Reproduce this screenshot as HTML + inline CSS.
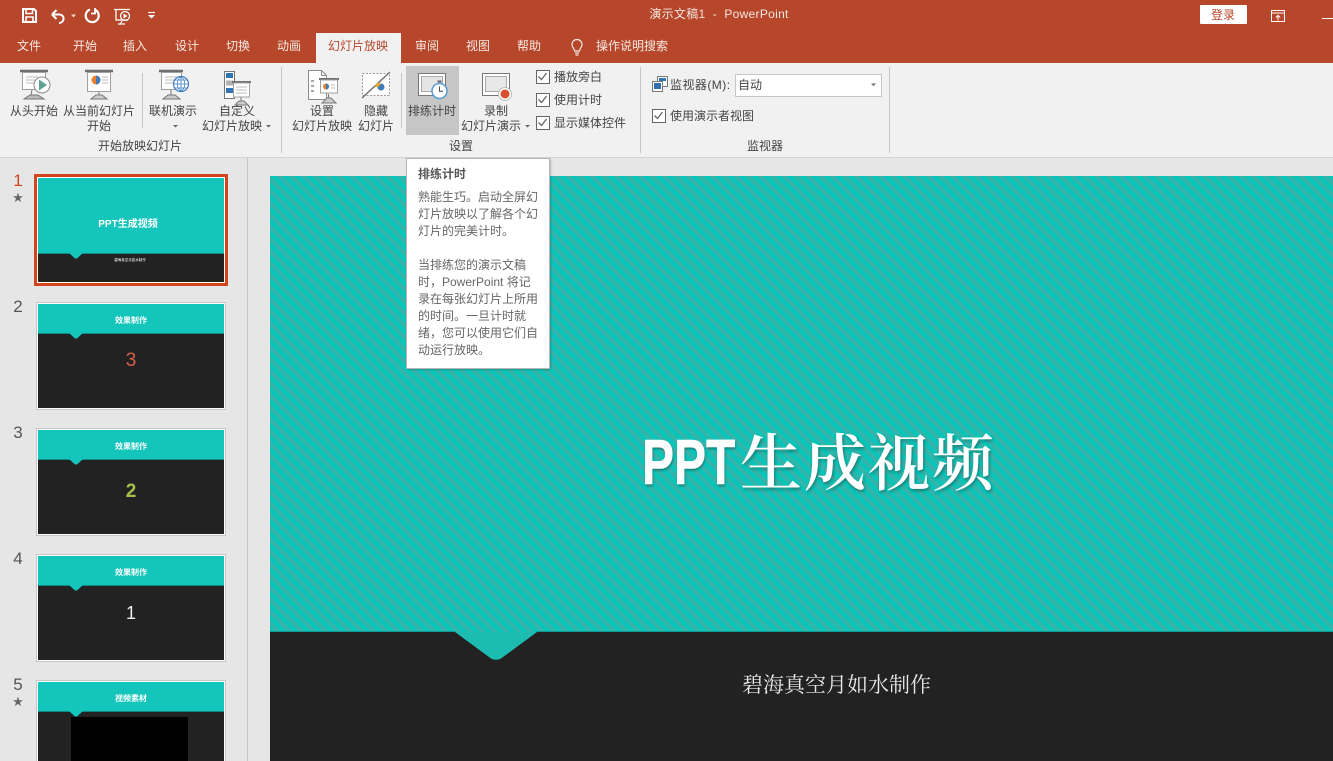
<!DOCTYPE html>
<html lang="zh-CN"><head><meta charset="utf-8"><title>演示文稿1 - PowerPoint</title>
<style>
html,body{margin:0;padding:0;width:1333px;height:761px;overflow:hidden;background:#e6e6e6}
body{position:relative;font-family:"Liberation Sans","Noto Sans CJK SC",sans-serif;font-size:12px;color:#444}
div,span,svg{position:absolute}
.t{white-space:nowrap;line-height:16px;height:16px}
.c{transform:translateX(-50%)}
.w{color:#f6e9e4}
.thumb{left:36px;width:188px;height:106px;border:1px solid #c6c6c6;background:#fff}
.in{left:1px;top:1px;width:186px;height:104px;background:#222;overflow:hidden}
.band{left:0;top:0;width:186px;height:29px;background:#13c5ba;border-bottom:1px solid #0e8a83}
.th{left:0;width:186px;text-align:center;top:10px;font:bold 8px/14px "Liberation Sans","Noto Sans CJK SC",sans-serif;color:#fff;white-space:nowrap}
.num{font-size:17px;line-height:20px;left:10px;width:16px;text-align:center;color:#555}
.star{font-size:13px;line-height:14px;left:10px;width:16px;text-align:center;color:#666;font-family:"DejaVu Sans",sans-serif}
.sep{width:1px;background:#c6c6c6}
.cb{width:12px;height:12px;border:1px solid #666;background:#fff}
</style></head><body>

<div style="left:0;top:0;width:1333px;height:63px;background:#b7472a"></div>
<div style="left:0;top:63px;width:1333px;height:94px;background:#f1f1f1"></div>
<div style="left:0;top:157px;width:1333px;height:1px;background:#d4d4d4"></div>

<!-- QAT -->
<svg style="left:0;top:0" width="170" height="32" fill="none" stroke="#fff">
<path d="M23 9h11l2 2v11H23z" stroke-width="2"/><path d="M26 9v4.500h6.500V9" stroke-width="1.600"/><path d="M26 22v-5h7v5" stroke-width="1.600"/>
<path d="M52 14.500l4.500-4.500M52 14.500l4.500 4.500" stroke-width="2"/><path d="M52.500 14.500h7c5.500.5 5.500 8-.5 8.500" stroke-width="2"/>
<path d="M71 14.500h5l-2.500 3z" fill="#f3d9d0" stroke="none"/>
<path d="M90 9.500a6.500 6.500 0 1 0 5.500 .5" stroke-width="2.200"/><path d="M95 8v5.500h-4" stroke-width="1.800"/>
<path d="M114 9.500h16M116 10v10h12" stroke-width="1.300"/><circle cx="125" cy="16" r="4.500" stroke-width="1.300"/><path d="M123.500 13.500l4 2.500-4 2.500z" fill="#fff" stroke="none"/><path d="M122 21l-2 3.500M118 24h7" stroke-width="1.200"/>
<path d="M148 12.500h7" stroke-width="1.200"/><path d="M148 15h7l-3.500 3.500z" fill="#fff" stroke="none"/>
</svg>
<div class="t w c" style="left:719px;top:6px;color:#f5e6e1;letter-spacing:.3px">演示文稿1&nbsp;&nbsp;-&nbsp;&nbsp;PowerPoint</div>
<div style="left:1200px;top:5px;width:47px;height:19px;background:#fff;border-radius:1px"></div>
<div class="t c" style="left:1223px;top:7px;color:#b7472a">登录</div>
<svg style="left:1265px;top:5px" width="68" height="24" fill="none" stroke="#fff"><path d="M6.500 5.500h13v11h-13zM6.500 8h13M13 15.500v-5M10.800 12.500l2.200-2.200 2.200 2.200"/><path d="M57 13.500h11" stroke-width="1"/></svg>

<!-- tabs -->
<div style="left:316px;top:33px;width:85px;height:30px;background:#f1f1f1"></div>
<div class="t w c" style="left:29px;top:38px">文件</div>
<div class="t w c" style="left:85px;top:38px">开始</div>
<div class="t w c" style="left:135px;top:38px">插入</div>
<div class="t w c" style="left:187px;top:38px">设计</div>
<div class="t w c" style="left:238px;top:38px">切换</div>
<div class="t w c" style="left:289px;top:38px">动画</div>
<div class="t c" style="left:358px;top:38px;color:#b7472a">幻灯片放映</div>
<div class="t w c" style="left:427px;top:38px">审阅</div>
<div class="t w c" style="left:478px;top:38px">视图</div>
<div class="t w c" style="left:529px;top:38px">帮助</div>
<svg style="left:568px;top:38px" width="18" height="20" fill="none" stroke="#f6e9e4" stroke-width="1.200"><path d="M6.500 13c0-2.500-2.500-3.500-2.500-6.500a5 5 0 0 1 10 0c0 3-2.500 4-2.500 6.500zM7 15h4M7.500 17h3"/></svg>
<div class="t w c" style="left:632px;top:38px">操作说明搜索</div>

<!-- ribbon highlight -->
<div style="left:406px;top:66px;width:53px;height:69px;background:#c6c6c6"></div>

<!-- separators -->
<div class="sep" style="left:142px;top:73px;height:55px"></div>
<div class="sep" style="left:281px;top:67px;height:86px"></div>
<div class="sep" style="left:401px;top:73px;height:55px"></div>
<div class="sep" style="left:640px;top:67px;height:86px"></div>
<div class="sep" style="left:889px;top:67px;height:86px"></div>

<!-- ribbon icons -->
<svg style="left:0;top:63px" width="640" height="50" fill="none">
<g transform="translate(20,0)"><path d="M0 8h28" stroke="#6f6f6f" stroke-width="2.500"/><path d="M2.500 9.500v17h23v-17z" fill="#fff" stroke="#a0a0a0"/><path d="M6 14h12M6 17h9M6 20h9" stroke="#bbb"/><path d="M12 27l-1 5M4 36l6-4h8l6 4z" fill="#bbb" stroke="#777"/><circle cx="22" cy="22" r="8" fill="#fff" stroke="#8a8a8a"/><path d="M19 16.500l8 5.500-8 5.500z" fill="#5fa191"/></g>
<g transform="translate(85,0)"><path d="M0 8h28" stroke="#6f6f6f" stroke-width="2.500"/><path d="M2.500 9.500v19h23v-19z" fill="#fff" stroke="#a0a0a0"/><circle cx="11" cy="17" r="4.500" fill="#e8812f"/><path d="M11 12.500a4.500 4.500 0 0 1 0 9z" fill="#3f7cb8"/><path d="M17 14h6M17 17h6M17 20h6" stroke="#bbb"/><path d="M14 29v3M6 36l5-4h6l5 4z" fill="#ccc" stroke="#777"/></g>
<g transform="translate(159,0)"><path d="M0 8h24" stroke="#6f6f6f" stroke-width="2.500"/><path d="M2.500 9.500v17h20v-17z" fill="#fff" stroke="#a0a0a0"/><path d="M6 14h12M6 17h9M6 20h8" stroke="#bbb"/><path d="M12 27v5M4 36l5-4h7l5 4z" fill="#ccc" stroke="#777"/><circle cx="22" cy="21" r="7.500" fill="#fff" stroke="#3d7ec0" stroke-width="1.200"/><path d="M14.500 21h15M22 13.500v15M16 17h12M16 25h12M22 13.500c-5 4-5 11 0 15M22 13.500c5 4 5 11 0 15" stroke="#3d7ec0" stroke-width=".8"/></g>
<g transform="translate(224,8)"><path d="M.5.500h10v27h-10z" fill="#fff" stroke="#777"/><path d="M2 2h7v5H2z" fill="#2f75b5"/><path d="M2 9.500h7v5H2z" fill="#b0b0b0"/><path d="M2 17h7v5H2z" fill="#2f75b5"/><path d="M8 11h19" stroke="#6f6f6f" stroke-width="2"/><path d="M9.500 12v14h16V12z" fill="#fff" stroke="#a0a0a0"/><path d="M12 16h11M12 19h11M12 22h11" stroke="#bbb"/><path d="M17 26v4M11 34l4-4h5l4 4z" fill="#ccc" stroke="#777"/></g>
<g transform="translate(308,7)"><path d="M.5.500h13l5 5v24H.5z" fill="#fff" stroke="#8c8c8c"/><path d="M13.500.500v5h5" stroke="#8c8c8c"/><path d="M3 11h3M3 16h3M3 21h3" stroke="#888" stroke-width="1.500"/><path d="M11 9h20" stroke="#6f6f6f" stroke-width="2"/><path d="M12.500 10v13h17V10z" fill="#fff" stroke="#a0a0a0"/><circle cx="18" cy="16.500" r="3" fill="#e8812f"/><path d="M18 13.500a3 3 0 0 1 0 6z" fill="#3f7cb8"/><path d="M23 15h4M23 18h4" stroke="#bbb"/><path d="M20.500 24v4M14 33l5-5h4l5 5z" fill="#ccc" stroke="#777"/></g>
<g transform="translate(362,9)"><path d="M.5 1.500h27v22H.5z" fill="#fff" stroke="#999" stroke-dasharray="2 1.500"/><path d="M0 26L28 0" stroke="#777" stroke-width="1.500"/><circle cx="19" cy="15" r="3.500" fill="#3f7cb8"/><path d="M13 15a3.500 3.500 0 0 1 6-3l-3 3z" fill="#e8a72f"/></g>
<g transform="translate(418,10)"><path d="M.5.500h27v22H.5z" fill="#fff" stroke="#777"/><path d="M3.500 3.500h21v15h-21z" fill="#e4e4e4" stroke="#aaa"/><circle cx="21.500" cy="18" r="7.500" fill="#fff" stroke="#5b9bd5" stroke-width="1.500"/><path d="M19.500 8.500h4" stroke="#666" stroke-width="2"/><path d="M21.500 13.500v4.800h3.500" stroke="#444"/></g>
<g transform="translate(482,10)"><path d="M.5.500h27v22H.5z" fill="#fff" stroke="#777"/><path d="M3.500 3.500h21v15h-21z" fill="#e8e8e8" stroke="#aaa"/><circle cx="23" cy="21" r="6.500" fill="#fff" stroke="#bbb"/><circle cx="23" cy="21" r="4.500" fill="#d9502e"/></g>
</svg>

<!-- ribbon labels -->
<div class="t c" style="left:34px;top:103px">从头开始</div>
<div class="t c" style="left:99px;top:103px">从当前幻灯片</div>
<div class="t c" style="left:99px;top:118px">开始</div>
<div class="t c" style="left:173px;top:103px">联机演示</div>
<div class="t c" style="left:237px;top:103px">自定义</div>
<div class="t c" style="left:232px;top:118px">幻灯片放映</div>
<div class="t c" style="left:322px;top:103px">设置</div>
<div class="t c" style="left:322px;top:118px">幻灯片放映</div>
<div class="t c" style="left:376px;top:103px">隐藏</div>
<div class="t c" style="left:376px;top:118px">幻灯片</div>
<div class="t c" style="left:432px;top:103px">排练计时</div>
<div class="t c" style="left:496px;top:103px">录制</div>
<div class="t c" style="left:491px;top:118px">幻灯片演示</div>
<svg style="left:0;top:120px" width="540" height="10" fill="#666"><path d="M173 5h5l-2.500 2.500zM266 5h5l-2.500 2.500zM525 5h5l-2.500 2.500z"/></svg>
<div class="t c" style="left:140px;top:138px">开始放映幻灯片</div>
<div class="t c" style="left:461px;top:138px">设置</div>
<div class="t c" style="left:765px;top:138px">监视器</div>

<!-- checkboxes -->
<div class="cb" style="left:536px;top:70px"></div>
<div class="cb" style="left:536px;top:93px"></div>
<div class="cb" style="left:536px;top:116px"></div>
<div class="cb" style="left:652px;top:109px"></div>
<svg style="left:0;top:0" width="680" height="130" fill="none" stroke="#666" stroke-width="1.300"><path d="M538.500 76.500l3 3 5-6.500M538.500 99.500l3 3 5-6.500M538.500 122.500l3 3 5-6.500M654.500 115.500l3 3 5-6.500"/></svg>
<div class="t" style="left:554px;top:69px">播放旁白</div>
<div class="t" style="left:554px;top:92px">使用计时</div>
<div class="t" style="left:554px;top:115px">显示媒体控件</div>

<!-- monitor -->
<svg style="left:652px;top:76px" width="16" height="17" fill="none"><path d="M5.500.500h10v10h-10z" fill="#fff" stroke="#777"/><path d="M7 2h7v3H7z" fill="#2f75b5"/><path d="M.5 5.500h10v10H.5z" fill="#fff" stroke="#777"/><path d="M2 7h7v6H2z" fill="#2f6fae"/></svg>
<div class="t" style="left:670px;top:77px;letter-spacing:.45px">监视器(M):</div>
<div style="left:735px;top:74px;width:145px;height:21px;background:#fff;border:1px solid #c6c6c6"></div>
<div class="t" style="left:738px;top:77px">自动</div>
<svg style="left:870px;top:82px" width="8" height="6" fill="#666"><path d="M1 1.500h5l-2.500 2.500z"/></svg>
<div class="t" style="left:670px;top:108px">使用演示者视图</div>

<!-- thumbnails pane -->
<div style="left:247px;top:158px;width:1px;height:603px;background:#c6c6c6"></div>

<div class="num" style="top:171px;color:#d2451e">1</div><div class="star" style="top:192px">★</div>
<div class="num" style="top:297px">2</div>
<div class="num" style="top:423px">3</div>
<div class="num" style="top:549px">4</div>
<div class="num" style="top:675px">5</div><div class="star" style="top:696px">★</div>

<div style="left:34px;top:174px;width:186px;height:104px;border:4px solid #d2451e;"></div>
<div style="left:37px;top:177px;width:188px;height:106px;background:#fff"></div>
<div style="left:38px;top:178px;width:186px;height:104px;background:#222;overflow:hidden">
 <div style="left:0;top:0;width:186px;height:75px;background:#13c5ba;border-bottom:1px solid #0e8a83"></div>
 <svg style="left:31px;top:75px" width="14" height="6"><path d="M0 0h14L8 5.500H6z" fill="#13c5ba"/></svg>
 <div class="th" style="left:-3px;font-size:10px;top:40px">PPT生成视频</div>
 <div class="th" style="top:75px;font-size:3.500px;font-weight:normal;left:-1px">碧海真空月如水制作</div>
</div>

<div class="thumb" style="top:302px"><div class="in"><div class="band"></div><svg style="left:31px;top:29px" width="14" height="6"><path d="M0 0h14L8 5.500H6z" fill="#13c5ba"/></svg><div class="th">效果制作</div><div style="left:0;width:186px;text-align:center;top:46px;font-size:19px;line-height:22px;color:#d9614c">3</div></div></div>
<div class="thumb" style="top:428px"><div class="in"><div class="band"></div><svg style="left:31px;top:29px" width="14" height="6"><path d="M0 0h14L8 5.500H6z" fill="#13c5ba"/></svg><div class="th">效果制作</div><div style="left:0;width:186px;text-align:center;top:51px;font-size:19px;font-weight:bold;line-height:22px;color:#a5c14b">2</div></div></div>
<div class="thumb" style="top:554px"><div class="in"><div class="band"></div><svg style="left:31px;top:29px" width="14" height="6"><path d="M0 0h14L8 5.500H6z" fill="#13c5ba"/></svg><div class="th">效果制作</div><div style="left:0;width:186px;text-align:center;top:46px;font-size:18px;line-height:22px;color:#eee">1</div></div></div>
<div class="thumb" style="top:680px"><div class="in"><div class="band"></div><svg style="left:31px;top:29px" width="14" height="6"><path d="M0 0h14L8 5.500H6z" fill="#13c5ba"/></svg><div class="th">视频素材</div><div style="left:33px;top:35px;width:117px;height:69px;background:#000"></div></div></div>

<!-- slide -->
<div style="left:270px;top:176px;width:1063px;height:585px;background:#222;overflow:hidden">
 <div style="left:0;top:0;width:1063px;height:456px;background:repeating-linear-gradient(45deg,#07c6b9 0,#07c6b9 3.500px,#34b4aa 4.250px,#34b4aa 7.750px,#07c6b9 8.500px)"></div>
 <svg style="left:185px;top:456px" width="82" height="29"><path d="M0 0h82L46 26.500q-5 2.500-10 0z" fill="#1dbcb0"/></svg>
</div>
<div style="left:270px;top:631px;width:185px;height:1px;background:#0e9c92"></div>
<div style="left:537px;top:631px;width:796px;height:1px;background:#0e9c92"></div>

<div style="left:642px;top:424px;height:76px;white-space:nowrap;font:bold 64px/76px 'Liberation Sans',sans-serif;color:#fff;-webkit-text-stroke:.6px #fff;text-shadow:1px 2px 3px rgba(0,0,0,.35);transform:scaleX(.75);transform-origin:0 50%">PPT</div>
<div style="left:740px;top:421px;height:76px;white-space:nowrap;font:600 62px/76px 'Noto Serif CJK SC',serif;letter-spacing:2px;color:#fff;text-shadow:1px 2px 3px rgba(0,0,0,.35)">生成视频</div>
<div style="left:742px;top:670px;white-space:nowrap;font:21px/28px 'Noto Serif CJK SC',serif;color:#e8e8e8">碧海真空月如水制作</div>

<!-- tooltip -->
<div style="left:406px;top:158px;width:142px;height:209px;background:#fff;border:1px solid #b5b5b5;box-shadow:1px 1px 2px rgba(0,0,0,.2)"></div>
<div class="t" style="left:418px;top:166px;font-weight:bold;color:#555">排练计时</div>
<div style="left:418px;top:189px;width:130px;line-height:17px;color:#666;white-space:nowrap">熟能生巧。启动全屏幻<br>灯片放映以了解各个幻<br>灯片的完美计时。<br><br>当排练您的演示文稿<br>时，PowerPoint 将记<br>录在每张幻灯片上所用<br>的时间。一旦计时就<br>绪，您可以使用它们自<br>动运行放映。</div>

</body></html>
